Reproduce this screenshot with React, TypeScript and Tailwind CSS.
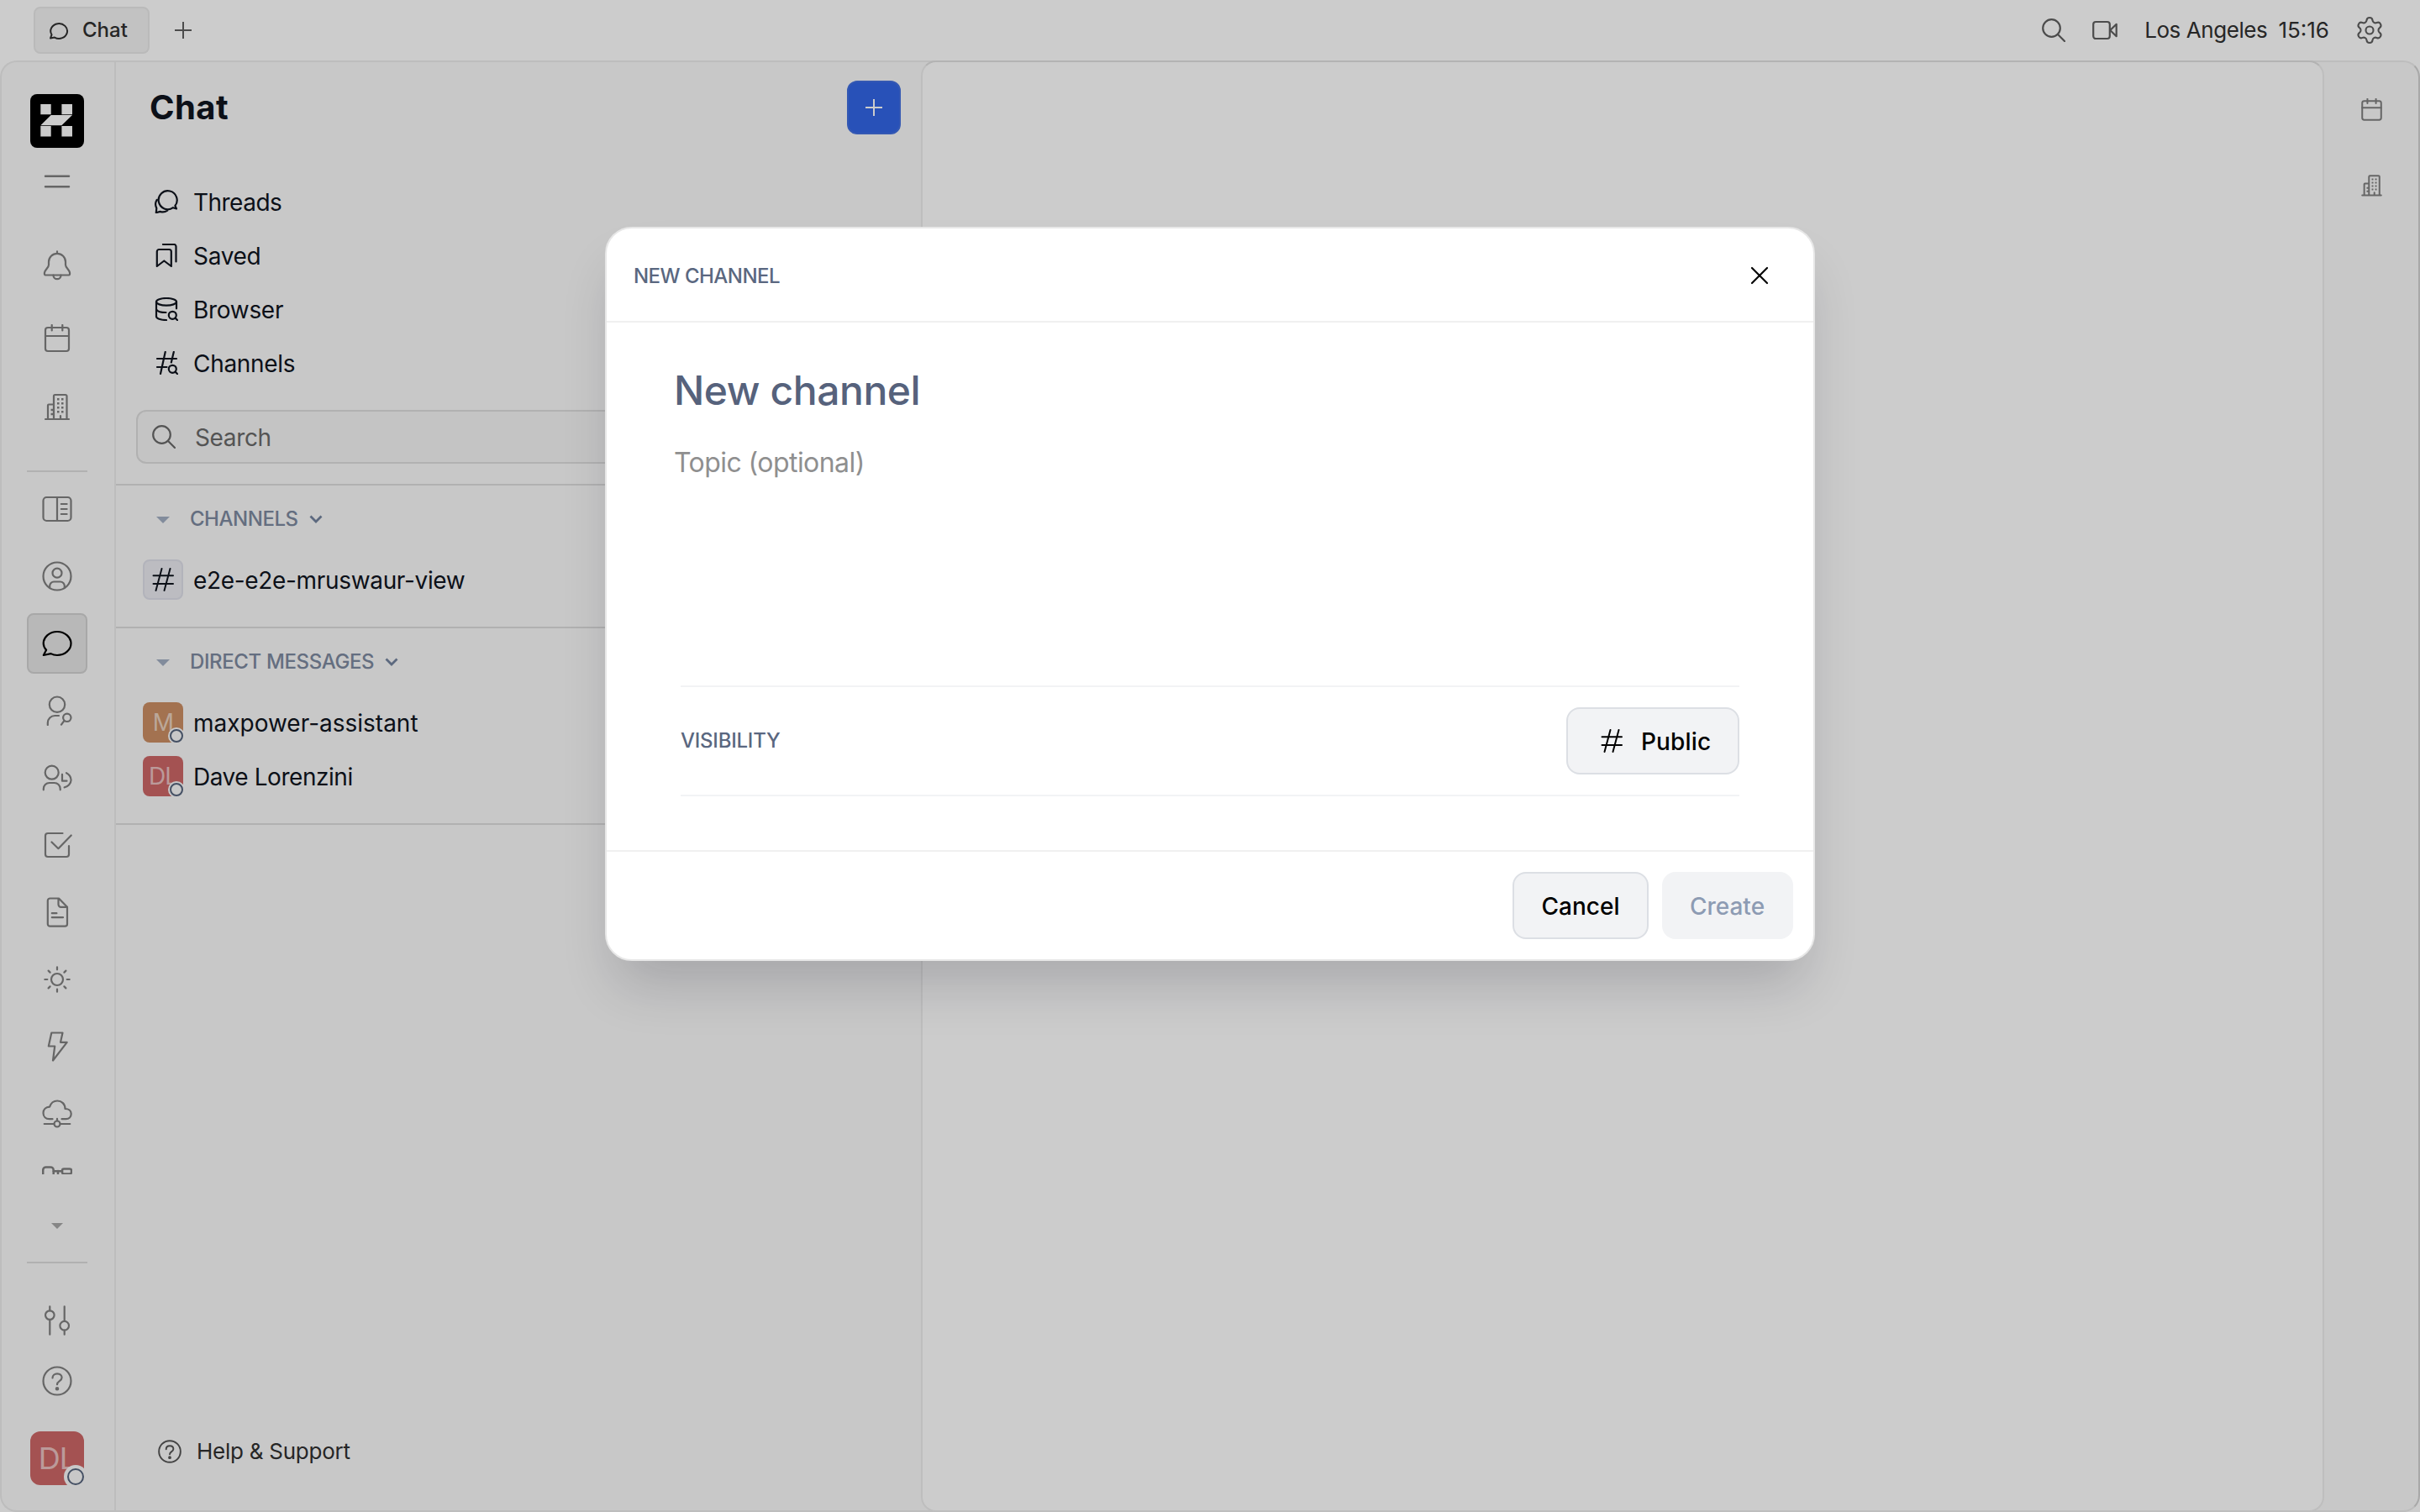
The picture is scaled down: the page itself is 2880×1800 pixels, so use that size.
import React from "react";
import { Settings } from "lucide-react";

type IconProps = { className?: string; strokeWidth?: number };

function Glyph({
  box = 36,
  className = "size-9",
  strokeWidth = 2.2,
  children,
}: IconProps & { box?: number; children: React.ReactNode }) {
  return (
    <svg
      viewBox={`0 0 ${box} ${box}`}
      className={`shrink-0 ${className}`}
      fill="none"
      stroke="currentColor"
      strokeWidth={strokeWidth}
      strokeLinecap="round"
      strokeLinejoin="round"
    >
      {children}
    </svg>
  );
}

const BellIcon = () => (
  <Glyph>
    <path d="M18 1.3v2.5M18 3.8a10 10 0 0 1 10 10v3.4c0 3.6 4.4 5.6 5 9.3.3 1.9.1 3-1.3 3H4.3c-1.4 0-1.6-1.1-1.3-3 .6-3.7 5-5.7 5-9.300v-3.400a10 10 0 0 1 10-10Z" />
    <path d="M13.500 29.700a4.500 4.500 0 0 0 9 0" />
  </Glyph>
);
const CalendarIcon = (p: IconProps) => (
  <Glyph {...p}>
    <rect x="4" y="4" width="28" height="28" rx="3" />
    <path d="M4 14h28M11.700 1v6.500M24.300 1v6.500" />
  </Glyph>
);
const BuildingIcon = (p: IconProps) => (
  <Glyph {...p}>
    <path d="M4 33h28M7 33V16.500a1 1 0 0 1 1-1h6M14 33V5.500a1.500 1.500 0 0 1 1.500-1.500h12.500a1.500 1.500 0 0 1 1.500 1.500V33M22 29v4" />
    <path
      strokeLinecap="butt"
      strokeWidth="2.500"
      d="M18 9.200h2.500M23 9.200h2.500M18 14.200h2.500M23 14.200h2.500M18 19.200h2.500M23 19.200h2.500M18 24.200h2.500M23 24.200h2.500M10.500 22h3M10.500 27h3"
    />
  </Glyph>
);
const ReaderIcon = () => (
  <Glyph>
    <rect x="1.500" y="4" width="33" height="28" rx="4" />
    <path d="M18 4v28M22.800 12h6.800M22.800 18h6.800M22.800 24h6.800" />
  </Glyph>
);
const ProfileIcon = () => (
  <Glyph>
    <circle cx="18" cy="18" r="16.500" />
    <circle cx="18" cy="14.200" r="5.500" />
    <path d="M9.200 31.500v-2a5 5 0 0 1 5-5h7.600a5 5 0 0 1 5 5v2" />
  </Glyph>
);
const ChatIcon = () => (
  <Glyph>
    <path d="M1.800 32l3.300-6.200C3 23.600 1.700 21 1.700 18 1.700 10.300 9 4 18 4s16.500 6.300 16.500 14S27 32 18 32c-2.800 0-5.300-.600-7.500-1.900Z" />
  </Glyph>
);
const UserSearchIcon = () => (
  <Glyph>
    <circle cx="18" cy="10.700" r="9.200" />
    <path d="M6.800 35v-2.500a8.500 8.500 0 0 1 8.500-8.500H20M26.500 29.800 23 34.700" />
    <circle cx="29.800" cy="26.300" r="4.700" />
  </Glyph>
);
const UserClockIcon = () => (
  <Glyph>
    <circle cx="11.700" cy="11.700" r="8" />
    <path d="M1.800 32.300V31a7 7 0 0 1 7-7h5.900a7 7 0 0 1 7 7v1.300M24 13.800v7.900h5.500M29 12.200a10 10 0 0 1 5.600 8.300 9.300 9.300 0 0 1-8 8.800" />
  </Glyph>
);
const TaskIcon = () => (
  <Glyph>
    <path d="M24.500 4H7a3 3 0 0 0-3 3v22a3 3 0 0 0 3 3h22a3 3 0 0 0 3-3V19M11.500 14.500l7.900 7.700L34.700 6.500" />
  </Glyph>
);
const FileIcon = () => (
  <Glyph>
    <path d="M9.500 1.500H20L30 11.800V32a2.700 2.700 0 0 1-2.700 2.700H9.500A2.700 2.700 0 0 1 6.800 32V4.200a2.700 2.700 0 0 1 2.700-2.700ZM19.500 1.800v7a3 3 0 0 0 3 3H29.700M11.800 19.200h5.600M11.800 24.200H25" />
  </Glyph>
);
const SunIcon = () => (
  <Glyph>
    <circle cx="18" cy="18" r="7" />
    <path d="M18 3.300v3M18 29.700v3M3.300 18h3M29.700 18h3M7.600 7.600l2 2M26.400 26.400l2 2M28.400 7.600l-2 2M9.600 26.400l-2 2" />
  </Glyph>
);
const BoltIcon = () => (
  <Glyph>
    <path d="M11.300 1.500h13.200l-2.500 11.300H29.700L13 34.500l2.200-17H7.800Z" />
  </Glyph>
);
const CloudIcon = () => (
  <Glyph>
    <path d="M12.500 24.200H8.800c-4.300 0-7.300-3-7.300-7.200s3-7 7.600-7.300C10.500 5.300 14 2.500 18.200 2.500c5.300 0 9.300 3.800 9.300 9.500 4.300 0 7.200 2.300 7.200 6.100s-2.700 6.100-6.200 6.100h-5" />
    <path d="M18 23.800v2.400M2.700 30H14M22 30h11.300" />
    <circle cx="18" cy="30" r="3.500" />
  </Glyph>
);
const FlowIcon = () => (
  <Glyph strokeWidth={2.5}>
    <rect x="1.200" y="1.400" width="12.500" height="13" rx="3.500" />
    <rect x="24" y="3.400" width="11" height="6" rx="2" />
    <path d="M13.700 6.200H24M19 6v20" />
  </Glyph>
);
const SlidersIcon = () => (
  <Glyph>
    <circle cx="9.300" cy="11.600" r="5.300" />
    <circle cx="26.700" cy="24.200" r="5.300" />
    <path d="M9.300 1.300v5M9.300 17v17.700M26.700 1.300v17.600M26.700 29.500v5.200" />
  </Glyph>
);
const HelpIcon = (p: IconProps) => (
  <Glyph {...p}>
    <circle cx="18" cy="18" r="16.500" />
    <path d="M12.500 14.500c0-3.200 2.400-5.200 5.600-5.200s5.500 1.900 5.500 4.800c0 4.200-5.600 4-5.600 8.100" />
    <circle cx="18" cy="27.200" r="1.200" fill="currentColor" />
  </Glyph>
);
const SearchIcon = ({ className = "size-7" }: IconProps) => (
  <Glyph box={28} className={className}>
    <circle cx="11.500" cy="11.500" r="10.300" />
    <path d="M18.800 18.800l8.200 8.200" />
  </Glyph>
);
const VideoIcon = () => (
  <Glyph box={30} className="size-[30px]">
    <rect x="1.200" y="5" width="19.600" height="20" rx="3" />
    <path d="M21.300 15l7.400-7.200v14.400Z" />
  </Glyph>
);
const ThreadsIcon = () => (
  <Glyph box={28} className="size-7">
    <path d="M26 22.500l-1.600-3.600A11 11 0 1 0 22 21.200ZM2.600 12C.5 15.500.6 18.500 2.300 21.800L1.800 27.200l4.700-1.300c3 1 6 .7 8.700-1.200" />
  </Glyph>
);
const SavedIcon = () => (
  <Glyph box={28} className="size-7">
    <path d="M2.800 27V9.500a2.500 2.500 0 0 1 2.500-2.500h12a2.500 2.500 0 0 1 2.500 2.500V27l-8.500-6.500ZM10 1h13a2.500 2.500 0 0 1 2.500 2.500V21.500" />
  </Glyph>
);
const BrowserIcon = () => (
  <Glyph box={28} className="size-7">
    <ellipse cx="14" cy="5.300" rx="12" ry="4.300" />
    <path d="M26 5.300v8M2 5.300v17.500c0 2.300 5 4.200 12 4.200M2 14.300c1.500 2.400 6 3.700 11.500 3.700" />
    <circle cx="21.300" cy="21.300" r="4.500" />
    <path d="M24.600 24.600l2.600 2.600" />
  </Glyph>
);
const HashSearchIcon = () => (
  <Glyph box={28} className="size-7">
    <path d="M3 9h23M3 19h11.500M12.700 1L7 27M22.800 1L19.800 13.500" />
    <circle cx="21.300" cy="21.300" r="4.500" />
    <path d="M24.600 24.600l2.600 2.600" />
  </Glyph>
);
const HashIcon = () => (
  <Glyph box={28} className="size-7" strokeWidth={2}>
    <path d="M2.500 9.300h23.500M2.500 19h23.500M12.500 1L5.500 27M22.500 1L15.500 27" />
  </Glyph>
);

function Caret({ className }: { className: string }) {
  return (
    <svg viewBox="0 0 14 7" className={className} fill="currentColor">
      <path d="M0 0h14L7 7Z" />
    </svg>
  );
}

function TopBar() {
  return (
    <header className="flex h-[72px] shrink-0 items-center pl-10 pr-[42px]">
      <div className="flex h-14 w-[138px] items-center rounded-lg border-2 border-[#e9e9e9] bg-[#f3f3f3] pl-4 text-[#303030]">
        <Glyph box={24} className="size-6" strokeWidth={2}>
          <path d="M2 21.500l1.500-4.200A9.900 8.900 0 1 1 7 20.600Z" />
        </Glyph>
        <span className="ml-4 text-2xl font-medium">Chat</span>
      </div>
      <Glyph box={20} className="ml-[30px] size-5 text-[#606060]" strokeWidth={2}>
        <path strokeLinecap="butt" d="M10 0v20M0 10h20" />
      </Glyph>
      <div className="ml-auto flex items-center text-[#606060]">
        <SearchIcon />
        <span className="ml-8 flex">
          <VideoIcon />
        </span>
        <span className="-mt-0.5 ml-8 text-[26px] tracking-[-0.42px] text-[#303030]">Los Angeles</span>
        <span className="-mt-0.5 ml-[13px] text-[26px] text-[#303030]">15:16</span>
        <Settings className="ml-[30px] size-9" strokeWidth={1.4} />
      </div>
    </header>
  );
}

function Avatar({ label, large, color }: { label: string; large?: boolean; color: string }) {
  return (
    <div
      className={`relative flex shrink-0 items-center justify-center text-white/60 ${color} ${
        large ? "size-16 rounded-xl text-4xl tracking-[-1px]" : "size-12 rounded-lg text-[28px] tracking-[-1px]"
      }`}
    >
      {label}
      <span
        className={`absolute rounded-full bg-[#fafafa] ${
          large ? "-bottom-1 -right-1 size-7 p-1" : "-bottom-0.5 -right-0.5 size-5 p-0.5"
        }`}
      >
        <span className="block size-full rounded-full border-2 border-[#56647d]" />
      </span>
    </div>
  );
}

const railIcons = [ReaderIcon, ProfileIcon, ChatIcon, UserSearchIcon, UserClockIcon, TaskIcon, FileIcon, SunIcon, BoltIcon, CloudIcon, FlowIcon];

function Rail() {
  return (
    <nav className="flex w-[136px] shrink-0 flex-col items-center border-r-2 border-[#ededed] pr-0.5 pt-[38px] text-[#808080]">
      <svg viewBox="0 0 64 64" className="size-16 shrink-0">
        <rect width="64" height="64" rx="8" fill="#000" />
        <path
          fill="#fff"
          d="M12.300 12h12.400v12.300H12.300ZM37.400 12h12.600v12.300H37.400ZM24.700 24.900H50L37.400 37.200H12.300ZM12.300 37.900h12.400v12.600H12.300ZM37.400 37.900h12.600v12.600H37.400Z"
        />
      </svg>
      <Glyph className="mt-[22px] size-9">
        <path d="M4 11.700h28M4 24.300h28" strokeWidth="2.500" />
      </Glyph>
      <div className="mt-16 flex">
        <BellIcon />
      </div>
      <div className="mt-[52px] flex">
        <CalendarIcon />
      </div>
      <div className="mt-11 flex">
        <BuildingIcon />
      </div>
      <div className="mt-[58px] h-0.5 w-[72px] shrink-0 bg-[#dedede]" />
      <div className="flex h-[836px] w-full shrink-0 flex-col items-center gap-11 overflow-hidden pt-[26px]">
        {railIcons.map((Icon, i) =>
          Icon === ChatIcon ? (
            <div
              key={i}
              className="-my-[18px] flex size-[72px] shrink-0 items-center justify-center rounded-lg border-2 border-[#d2d2d2] bg-[#e6e6e6] text-black"
            >
              <Icon />
            </div>
          ) : (
            <Icon key={i} />
          )
        )}
      </div>
      <Caret className="mt-[58px] h-[7px] w-3.5 shrink-0 text-[#a8a8a8]" />
      <div className="mt-[39px] h-0.5 w-[72px] shrink-0 bg-[#dedede]" />
      <div className="mt-[50px] flex">
        <SlidersIcon />
      </div>
      <div className="mt-9 flex">
        <HelpIcon />
      </div>
      <div className="mt-[42px]">
        <Avatar label="DL" large color="bg-[#cd6767]" />
      </div>
    </nav>
  );
}

function SectionHeader({ title, tracking }: { title: string; tracking: string }) {
  return (
    <div className="flex h-20 items-center pl-12 text-[#7e8aa0]">
      <Caret className="mt-0.5 h-[8px] w-4 text-[#a3afc3]" />
      <span className={`ml-6 text-2xl font-medium ${tracking}`}>{title}</span>
      <svg viewBox="0 0 16 10" className="ml-[13px] h-2.5 w-4" fill="none" stroke="#74849f" strokeWidth="2.800">
        <path d="M1.500 1.500L8 8l6.500-6.500" />
      </svg>
    </div>
  );
}

function Sidebar() {
  return (
    <aside className="flex w-[958px] shrink-0 flex-col text-[28px] text-[#0f141e]">
      <div className="flex h-[86px] shrink-0 items-end justify-between pl-10 pr-6">
        <h1 className="text-[40px] font-bold leading-[64px] tracking-[0.43px]">Chat</h1>
        <button className="flex size-16 items-center justify-center rounded-xl border-2 border-[#416fe0] bg-[#3366e6] text-white">
          <Glyph box={20} className="size-5" strokeWidth={2}>
            <path strokeLinecap="butt" d="M10 0v20M0 10h20" />
          </Glyph>
        </button>
      </div>
      <div className="mt-12 flex flex-col pl-[46px]">
        <div className="flex h-16 items-center gap-[18px]">
          <ThreadsIcon />
          <span className="mt-0.5 tracking-[-0.53px]">Threads</span>
        </div>
        <div className="flex h-16 items-center gap-[18px]">
          <SavedIcon />
          <span className="mt-0.5 tracking-[-0.3px]">Saved</span>
        </div>
        <div className="flex h-16 items-center gap-[18px]">
          <BrowserIcon />
          <span className="mt-0.5 tracking-[-0.3px]">Browser</span>
        </div>
        <div className="flex h-16 items-center gap-[18px]">
          <HashSearchIcon />
          <span className="mt-0.5 tracking-[-0.3px]">Channels</span>
        </div>
      </div>
      <div className="mx-6 mt-6 flex h-16 items-center rounded-xl border-2 border-[#dedede] bg-[#f5f5f5] pl-[17px] text-[#696969]">
        <SearchIcon />
        <span className="ml-[23px] mt-0.5 tracking-[-0.37px]">Search</span>
      </div>
      <section className="mt-6 border-y-2 border-[#dedede] pb-6">
        <SectionHeader title="CHANNELS" tracking="tracking-[-0.48px]" />
        <div className="flex h-16 items-center gap-3 pl-8">
          <div className="flex size-12 items-center justify-center rounded-lg border-2 border-[#dfe0ea] bg-[#ebecf2]">
            <HashIcon />
          </div>
          <span className="mt-0.5 tracking-[-0.33px]">e2e-e2e-mruswaur-view</span>
        </div>
      </section>
      <section className="border-b-2 border-[#dedede] pb-6">
        <SectionHeader title="DIRECT MESSAGES" tracking="tracking-[-0.38px]" />
        <div className="flex h-16 items-center gap-3 pl-8">
          <Avatar label="M" color="bg-[#cc8f64]" />
          <span className="mt-0.5">maxpower-assistant</span>
        </div>
        <div className="flex h-16 items-center gap-3 pl-8">
          <Avatar label="DL" color="bg-[#cd6767]" />
          <span className="mt-0.5 tracking-[-0.45px]">Dave Lorenzini</span>
        </div>
      </section>
      <div className="mb-[38px] mt-auto flex h-16 items-center pl-[50px] text-[26px] text-[#303030]">
        <span className="flex text-[#555]">
          <HelpIcon className="size-7" strokeWidth={2.5} />
        </span>
        <span className="-mt-0.5 ml-[18px] tracking-[-0.25px]">Help &amp; Support</span>
      </div>
    </aside>
  );
}

function NewChannelDialog() {
  return (
    <div className="absolute inset-0 flex items-start justify-center bg-black/20 pt-[270px]">
      <div
        role="dialog"
        className="flex h-[874px] w-[1440px] flex-col rounded-[32px] border-2 border-[#e7e7e7] bg-white shadow-[0_40px_64px_-14px_rgba(14,16,30,0.19)]"
      >
        <div className="flex h-28 shrink-0 items-center justify-between border-b-2 border-[#f0f0f0] pl-8 pr-[46px]">
          <h2 className="mt-[3px] text-2xl font-medium tracking-[-0.54px] text-[#5a6780]">NEW CHANNEL</h2>
          <Glyph className="mt-0.5 size-9 text-black">
            <path d="M9 9l18 18M27 9L9 27" />
          </Glyph>
        </div>
        <div className="flex flex-1 flex-col pl-20 pr-[88px] pt-[49px]">
          <div className="h-16 text-5xl font-medium leading-[64px] tracking-[-0.45px] text-[#56627c]">New channel</div>
          <div className="mt-[30px] h-12 text-[32px] leading-[48px] tracking-[-0.56px] text-[#8f8f8f]">Topic (optional)</div>
          <div className="ml-2 mt-[241px] flex h-[132px] items-center justify-between border-y-2 border-[#f2f3f5]">
            <span className="text-2xl font-medium tracking-[-0.23px] text-[#5a6780]">VISIBILITY</span>
            <button className="flex h-20 w-[206px] items-center rounded-2xl border-2 border-[#dcdfe4] bg-[#f2f3f5] pl-[38px] text-[28px] font-medium tracking-[0.15px] text-black">
              <HashIcon />
              <span className="ml-[21px] mt-px">Public</span>
            </button>
          </div>
        </div>
        <div className="flex h-[130px] shrink-0 items-center justify-end gap-4 border-t-2 border-[#f0f0f0] pr-6 text-[28px] font-medium">
          <button className="h-20 w-[162px] rounded-2xl border-2 border-[#dcdfe4] bg-[#f2f3f5] pt-px text-black">Cancel</button>
          <button className="h-20 w-[156px] rounded-2xl bg-[#f2f3f5] pr-px pt-px text-[#8d9bb3]">Create</button>
        </div>
      </div>
    </div>
  );
}

export default function App() {
  return (
    <div className="relative flex h-[1800px] w-[2880px] flex-col overflow-hidden bg-white font-['Inter',sans-serif]">
      <TopBar />
      <div className="flex flex-1 rounded-[20px] border-2 border-[#ededed] border-r-[#d2d2d2] bg-[#fafafa]">
        <Rail />
        <Sidebar />
        <main className="-my-0.5 flex-1 rounded-[18px] border-2 border-[#eeeeee] border-t-[#e0e0e0] bg-white" />
        <aside className="flex w-28 shrink-0 flex-col items-center pt-[43px] text-[#808080]">
          <CalendarIcon className="size-[29px]" strokeWidth={2.5} />
          <div className="mt-[60px] flex">
            <BuildingIcon className="size-[29px]" strokeWidth={2.5} />
          </div>
        </aside>
      </div>
      <NewChannelDialog />
    </div>
  );
}
